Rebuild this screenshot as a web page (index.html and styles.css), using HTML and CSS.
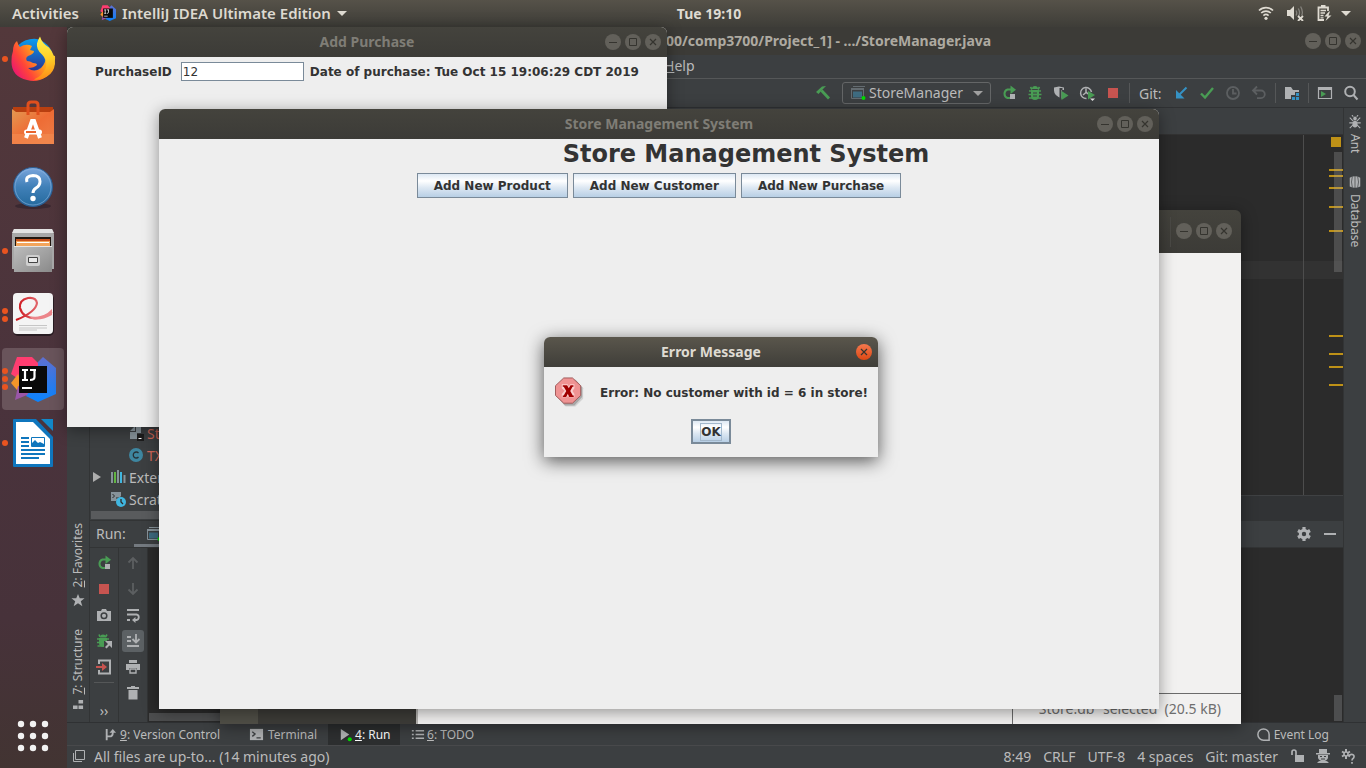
FILE: index.html
```html
<!DOCTYPE html>
<html lang="en">
<head>
<meta charset="utf-8">
<title>Store Management System</title>
<link rel="stylesheet" href="styles.css">
</head>
<body>
<svg class="defs" aria-hidden="true">
  <defs>
    <linearGradient id="g-help" x1="0" y1="0" x2="0" y2="1"><stop offset="0" stop-color="#7aa5dc"/><stop offset=".5" stop-color="#4080b8"/><stop offset="1" stop-color="#24699c"/></linearGradient>
    <linearGradient id="g-bag" x1="0" y1="0" x2="1" y2="1"><stop offset="0" stop-color="#e39a52"/><stop offset=".5" stop-color="#ee6c35"/><stop offset="1" stop-color="#ef8048"/></linearGradient>
    <linearGradient id="g-steel" x1="0" y1="0" x2="1" y2="1"><stop offset="0" stop-color="#bdbdbd"/><stop offset="1" stop-color="#8a8a8a"/></linearGradient>
    <linearGradient id="g-fox" x1="1" y1=".2" x2="0" y2=".8"><stop offset="0" stop-color="#ffd93a"/><stop offset=".4" stop-color="#ff9b1c"/><stop offset=".7" stop-color="#ff4538"/><stop offset="1" stop-color="#e8107a"/></linearGradient>
    <linearGradient id="g-tail" x1="0" y1="0" x2="0" y2="1"><stop offset="0" stop-color="#fff44f"/><stop offset=".5" stop-color="#ffd028"/><stop offset="1" stop-color="#ff8a16"/></linearGradient>
    <linearGradient id="g-globe" x1="0" y1="0" x2="0" y2="1"><stop offset="0" stop-color="#0a9cf0"/><stop offset="1" stop-color="#2a2f8e"/></linearGradient>
    <linearGradient id="g-ribbon" x1="0" y1="0" x2="1" y2="0"><stop offset="0" stop-color="#cc1118"/><stop offset="1" stop-color="#f0a0a4"/></linearGradient>
    <linearGradient id="g-idea" x1="0" y1="0" x2="0" y2="1"><stop offset="0" stop-color="#5f6fd0"/><stop offset="1" stop-color="#0a84ff"/></linearGradient>
  </defs>
  <symbol id="i-min" viewBox="0 0 16 16"><path d="M4 8.500h8" stroke="currentColor" fill="none"/></symbol>
  <symbol id="i-max" viewBox="0 0 16 16"><path d="M4.500 4.500h7v7h-7z" stroke="currentColor" fill="none"/></symbol>
  <symbol id="i-close" viewBox="0 0 16 16"><path d="M5 5l6 6M11 5l-6 6" stroke="currentColor" stroke-width="1.200" fill="none"/></symbol>
  <symbol id="i-idea" viewBox="0 0 46 46">
    <path d="M26 8L33 1l13 11v26L28 46 16 40z" fill="url(#g-idea)"/>
    <path d="M7 1h15l6 6v12L10 24 1 18z" fill="#ff3d70"/><path d="M1 27l7-9 6 14-7 2z" fill="#f5962a"/><path d="M8 30l-3 14 12-5 4-6z" fill="#9a56a8"/>
    <path d="M9 10h28v27H9z" fill="#0a0a0a"/><path d="M12 14h6M15 14v10M12 24h6M20 14h6M24.500 14v7q0 3-4.500 3" stroke="#fff" stroke-width="2.200" fill="none"/><path d="M12 31h10v2H12z" fill="#fff"/>
  </symbol>
  <symbol id="i-rerun" viewBox="0 0 16 16"><path d="M9 13H6.500A4.500 4.500 0 0 1 6.500 4.500H11" fill="none" stroke="#499c54" stroke-width="2"/><path d="M9.500 0.500L15 4.800 9.500 9z" fill="#499c54"/><path d="M9 9h5v5H9z" fill="#afb1b3"/></symbol>
  <symbol id="i-bug" viewBox="0 0 16 16"><path d="M5 4.500L3.500 2M11 4.500L12.500 2M2 6h12M1.500 9.500h13M2 13h12" stroke="#499c54" stroke-width="1.600"/><path d="M5 4a3 3 0 0 1 6 0zM4 5h8v6a4 4 0 0 1-8 0z" fill="#499c54"/><path d="M6 8h4M6 11h4" stroke="#3c3f41"/></symbol>
  <symbol id="i-stop" viewBox="0 0 16 16"><path d="M3 3h10v10H3z" fill="#c75450"/></symbol>
  <symbol id="i-app" viewBox="0 0 16 16"><path d="M3 1.500h12" stroke="currentColor"/><path d="M1.500 4.500h12v9h-12z" fill="none" stroke="currentColor"/><path d="M1 3h13v2H1z" fill="currentColor"/><path d="M3 6.500h9v6H3z" fill="#3e6b80"/><circle cx="13.500" cy="13" r="2" fill="#0d0"/></symbol>
  <symbol id="i-term" viewBox="0 0 16 16"><path d="M1 2h14v12H1z" fill="#afb1b3"/><path d="M3.500 5l3 2.500-3 2.500M8 11.500h4.500" fill="none" stroke="#3c3f41" stroke-width="1.400"/></symbol>
</svg>

<div class="desktop">
  <header class="topbar">
    <div class="topbar-left">
      <button class="bar-btn">Activities</button>
      <button class="bar-btn app-menu"><svg class="ic"><use href="#i-idea"/></svg>IntelliJ IDEA Ultimate Edition<span class="caret"></span></button>
    </div>
    <button class="bar-btn clock">Tue 19:10</button>
    <button class="bar-btn tray" aria-label="System menu">
      <svg class="ic" viewBox="0 0 16 16" fill="none" stroke="#dfdbd2" stroke-width="1.700"><path d="M1 5.500a10 10 0 0 1 14 0M3.200 8a7 7 0 0 1 9.600 0M5.400 10.600a4 4 0 0 1 5.200 0"/><circle cx="8" cy="13.300" r="1.600" fill="#dfdbd2" stroke="none"/></svg>
      <svg class="ic wide" viewBox="0 0 18 16"><path d="M1 5h3l4-4v14l-4-4H1z" fill="#dfdbd2"/><path d="M10 5.500q1.500 2.500 0 5M12.300 3.500q2.500 4.500 0 8M14.600 1.500q3 5 1 9" stroke="#84827c" stroke-width="1.300" fill="none"/><path d="M12 11l5 5M17 11l-5 5" stroke="#dfdbd2" stroke-width="1.800"/></svg>
      <svg class="ic" viewBox="0 0 16 16"><path d="M8 15H2.500V2.500H12V6" fill="none" stroke="#dfdbd2" stroke-width="1.800"/><path d="M5 0h4.500v2.500H5z" fill="#dfdbd2"/><path d="M4.500 5.500h5.500M4.500 8h4.500M4.500 10.500h3M4.500 12.800h3" stroke="#dfdbd2" stroke-width="1.300"/><path d="M13 6.500L8.500 11.500h3l-2 4.500 6-5.500h-3l1.500-4z" fill="#dfdbd2"/></svg>
      <span class="caret"></span>
    </button>
  </header>

  <div class="main">
    <nav class="dock" aria-label="Dock">
      <button class="dock-item" aria-label="Firefox"><span class="dots"><i></i></span>
        <svg viewBox="0 0 46 46"><circle cx="23" cy="23.500" r="20.500" fill="url(#g-globe)"/><path d="M10 10q3-5 12-7 6-1 9 3l4 14-2 10-11 6-9-10z" fill="url(#g-globe)"/><path d="M3 15Q3 8 7 5q1 4 3 6 6-4 12-1l-2 4 4 1q0 3-6 5-3 2-1 5 3 0 6 2 4 0 4 2-3 3-9 3 6 5 13 0 6-6 5-14l9 2q1 14-9 21-9 6-19 3Q1 40 1.500 25q0-6 1.500-10z" fill="url(#g-fox)"/><path d="M30 .5q2 7 9 11 6 7 6 16-1 9-8 13-6 4-13 3 9-4 12-12 1-8-4-13-6-5-5-11 1-4 3-7z" fill="url(#g-tail)"/></svg></button>
      <button class="dock-item" aria-label="Ubuntu Software"><span class="dots"></span>
        <svg viewBox="0 0 46 46"><path d="M3 7h40v5H3z" fill="#b83f10"/><path d="M2 9l4 3h34l4-3v35H2z" fill="url(#g-bag)"/><path d="M2 34h42v10H2z" fill="#f28a50" opacity=".7"/><path d="M18 15V5q0-3 3-3h4q3 0 3 3v10" fill="none" stroke="#e04f1d" stroke-width="3"/><path d="M16 38l6-17h2l6 17" stroke="#fff" stroke-width="4" fill="none"/><rect x="14" y="29.500" width="18" height="5" rx="2.500" fill="#fff"/><path d="M16 32h10" stroke="#e9652e" stroke-width="2"/></svg></button>
      <button class="dock-item" aria-label="Help"><span class="dots"></span>
        <svg viewBox="0 0 46 46"><ellipse cx="23" cy="42" rx="18" ry="3" fill="#3a2830"/><circle cx="23" cy="23" r="19.500" fill="url(#g-help)" stroke="#2c5e93"/><circle cx="23" cy="23" r="18" fill="none" stroke="#8db4e0" opacity=".6"/><path d="M17 18q-2-6 6-6.500 7 0 7 6 0 4-4 6.500-3 2-3 5" fill="none" stroke="#fff" stroke-width="3"/><circle cx="23" cy="34.500" r="2.700" fill="#fff"/></svg></button>
      <button class="dock-item" aria-label="Files"><span class="dots"><i></i></span>
        <svg viewBox="0 0 46 46"><path d="M4 1h38l2 5v35H2V6z" fill="#a8a8a8"/><path d="M4 1h38l2 4H2z" fill="#e3e3e3"/><path d="M5 9h36v10H5z" fill="#20160f"/><path d="M6 11h34v7H6z" fill="#c8501c"/><path d="M6 13h34v5H6z" fill="#f3a55c"/><path d="M7 14h32v1H7z" fill="#fff"/><path d="M4 18h38v26H4z" fill="url(#g-steel)"/><path d="M4 18h38v1H4z" fill="#e6e6e6"/><rect x="16" y="27" width="14" height="11" rx="2" fill="#cfcfcf"/><path d="M18.500 29.500h9v5h-9z" fill="#e9e9e9" stroke="#444"/></svg></button>
      <button class="dock-item" aria-label="Document Viewer"><span class="dots"><i></i><i></i></span>
        <svg viewBox="0 0 46 46"><rect x="3" y="2" width="41" height="42" rx="5" fill="#281c22"/><rect x="3" y="1" width="40" height="41" rx="4" fill="#f4f4f4"/><path d="M6 28Q26 20 27 11 26 5 18 6q-9 2-8 10 3 11 18 10 8-1 14-6" fill="none" stroke="url(#g-ribbon)" stroke-width="2.200"/><path d="M20 25q14 1 22-8v6q-11 6-20 4z" fill="#ec858a"/><path d="M9 33.500h28M9 36h28M9 38h18" stroke="#c6c6c6"/></svg></button>
      <button class="dock-item active" aria-label="IntelliJ IDEA"><span class="dots"><i></i><i></i><i></i></span>
        <svg><use href="#i-idea"/></svg></button>
      <button class="dock-item" aria-label="LibreOffice Writer"><span class="dots"><i></i></span>
        <svg class="tall" viewBox="0 0 46 48"><path d="M4 0h22l17 18v29a1 1 0 0 1-1 1H4a1 1 0 0 1-1-1V1a1 1 0 0 1 1-1z" fill="#0f76bd"/><path d="M31 0h12v12z" fill="#1288c9"/><path d="M6 3h17l17 17v25H6z" fill="#fff"/><path d="M11 19h8M11 23h8M11 27h8M11 31h24M11 35h24M11 39h18" stroke="#0f76bd" stroke-width="2"/><path d="M21.500 18.500h13v9h-13z" fill="#fff" stroke="#0f76bd"/><path d="M22 27v-3l3-3 3 3 2-1 4 2v2z" fill="#0f76bd"/></svg></button>
      <button class="dock-item apps" aria-label="Show Applications"><span class="dots"></span>
        <svg viewBox="0 0 46 46" fill="#f2f2f2"><circle cx="11" cy="11" r="3.200"/><circle cx="23" cy="11" r="3.200"/><circle cx="35" cy="11" r="3.200"/><circle cx="11" cy="23" r="3.200"/><circle cx="23" cy="23" r="3.200"/><circle cx="35" cy="23" r="3.200"/><circle cx="11" cy="35" r="3.200"/><circle cx="23" cy="35" r="3.200"/><circle cx="35" cy="35" r="3.200"/></svg></button>
    </nav>

    <div class="workspace">
      <section class="ide" aria-label="IntelliJ IDEA">
        <div class="ide-title"><span class="ide-name">00/comp3700/Project_1] - .../StoreManager.java</span>
          <div class="controls"><button aria-label="Minimize"><svg><use href="#i-min"/></svg></button><button aria-label="Maximize"><svg><use href="#i-max"/></svg></button><button aria-label="Close"><svg><use href="#i-close"/></svg></button></div>
        </div>
        <div class="ide-menu"><button><u>H</u>elp</button></div>
        <div class="ide-toolbar">
          <button class="tool" aria-label="Build"><svg viewBox="0 0 16 16"><path d="M6.500 5.500L14 13.500" stroke="#499c54" stroke-width="2.800"/><path d="M1 7l6-5.500 4-.5-3 3-4.500 5z" fill="#499c54"/></svg></button>
          <div class="combo"><svg class="ic"><use href="#i-app"/></svg><select aria-label="Run configuration"><option>StoreManager</option></select><span class="caret"></span></div>
          <button class="tool" aria-label="Rerun"><svg><use href="#i-rerun"/></svg></button>
          <button class="tool" aria-label="Debug"><svg><use href="#i-bug"/></svg></button>
          <button class="tool" aria-label="Coverage"><svg viewBox="0 0 16 16"><path d="M1 2.500l5-1 5 1V5L9 5v8.500q-8-2.500-8-8z" fill="#afb1b3"/><path d="M6.500 3h3v2l-1 0v8h-2z" fill="#3c3f41"/><path d="M8.500 6l7 4.500-7 4.500z" fill="#499c54"/></svg></button>
          <button class="tool" aria-label="Profile"><svg viewBox="0 0 16 16"><path d="M12.500 7a5.500 5.500 0 1 0-5 6.500M7 3.500v4L4 10M7 7l2 2" fill="none" stroke="#afb1b3" stroke-width="1.500"/><path d="M9 6l7 4-7 4.500z" fill="#499c54"/><path d="M11 13.500h5L13.500 16z" fill="#ddd"/></svg></button>
          <button class="tool" aria-label="Stop"><svg><use href="#i-stop"/></svg></button>
          <span class="sep"></span><span class="git">Git:</span>
          <button class="tool" aria-label="Update Project"><svg viewBox="0 0 16 16"><path d="M13.500 2.500L5 11" stroke="#3592c4" stroke-width="2"/><path d="M3 5v8.500h8.500z" fill="#3592c4"/></svg></button>
          <button class="tool" aria-label="Commit"><svg viewBox="0 0 16 16"><path d="M2 8.500l4 4L14 3" fill="none" stroke="#499c54" stroke-width="2.400"/></svg></button>
          <button class="tool" aria-label="History"><svg viewBox="0 0 16 16" fill="none" stroke="#5c5f61" stroke-width="1.800"><circle cx="8" cy="8" r="6"/><path d="M8 4v4.500h3.500"/></svg></button>
          <button class="tool" aria-label="Rollback"><svg viewBox="0 0 16 16" fill="none" stroke="#5c5f61" stroke-width="1.800"><path d="M2.500 5.500H10a3.800 3.800 0 0 1 0 7.600H6M6 1.500l-4 4 4 4"/></svg></button>
          <span class="sep"></span>
          <button class="tool" aria-label="Project Structure"><svg viewBox="0 0 16 16"><path d="M1 2h6l2 3h6v2h-4v3H7v4H1z" fill="#afb1b3"/><path d="M12 8h3v3h-3zM8 12h3v3H8zM12 12h3v3h-3zM8 11h3v0H8z" fill="#3592c4"/></svg></button>
          <span class="sep"></span>
          <button class="tool" aria-label="Run Anything"><svg viewBox="0 0 16 16"><path d="M1.500 2.500h13v11h-13z" fill="none" stroke="#afb1b3" stroke-width="1.200"/><path d="M1 2h14v3H1z" fill="#afb1b3"/><path d="M4 6l5 3-5 3z" fill="#499c54"/></svg></button>
          <button class="tool" aria-label="Search"><svg viewBox="0 0 16 16" fill="none" stroke="#afb1b3" stroke-width="2"><circle cx="7" cy="6.500" r="4.800"/><path d="M10.500 10l4 4.500"/></svg></button>
        </div>

        <div class="ide-body">
          <div class="stripe left">
            <button class="stripe-btn"><svg class="ic" viewBox="0 0 16 16"><path d="M8 1l2 5h5.500l-4.300 3.500L13 15l-5-3.300L3 15l1.800-5.500L.5 6H6z" fill="#afb1b3"/></svg><span class="up"><u>2</u>: Favorites</span></button>
            <button class="stripe-btn"><svg class="ic sm" viewBox="0 0 12 12"><path d="M6 1h5v4H6zM0 7h5v4H0zM6 7h5v4H6z" fill="#afb1b3"/></svg><span class="up"><u>7</u>: Structure</span></button>
          </div>
          <div class="center">
            <div class="upper">
              <div class="project">
                <div class="row deep red"><svg class="ic" viewBox="0 0 16 16"><path d="M2 6l5-5v5zM8 1h5v7H9v6H2V7h6z" fill="#87939a"/><path d="M9 9h7v7H9z" fill="#1e1e1e"/><path d="M10.500 13.500h3" stroke="#fff"/></svg>Store</div>
                <div class="row deep red"><svg class="ic" viewBox="0 0 16 16"><circle cx="8" cy="8" r="7" fill="#3e86a0"/><path d="M10.500 6a3 3 0 1 0 0 4" fill="none" stroke="#263238" stroke-width="1.300"/></svg>TXT</div>
                <div class="row"><span class="twist"></span><svg class="ic" viewBox="0 0 16 16"><path d="M2 3v11M14.500 6v8" stroke="#87939a" stroke-width="2"/><path d="M5 3v11" stroke="#62b543" stroke-width="2"/><path d="M8 1v13" stroke="#87939a" stroke-width="2"/><path d="M11 3v11" stroke="#40b6e0" stroke-width="2"/></svg>External Libraries</div>
                <div class="row"><span class="twist none"></span><svg class="ic" viewBox="0 0 16 16"><path d="M1 1h10v4L6 10H1z" fill="#87939a"/><path d="M2.500 3l2 2-2 2M6 7h3" fill="none" stroke="#2b2b2b"/><circle cx="11" cy="11" r="5" fill="#40b6e0"/><path d="M11 8v3l2 2" stroke="#2b2b2b" fill="none" stroke-width="1.300"/></svg>Scratches and Consoles</div>
                <div class="hbar"></div>
              </div>
              <div class="editor-col">
                <div class="tabs"></div>
                <div class="editor">
                  <div class="caret-row"></div><div class="ruler"></div>
                  <div class="warn"></div>
                  <i class="mark" style="top:34px"></i><i class="mark" style="top:40px"></i><i class="mark" style="top:52px"></i><i class="mark" style="top:71px"></i><i class="mark" style="top:95px"></i><i class="mark" style="top:200px"></i><i class="mark" style="top:218px"></i><i class="mark" style="top:231px"></i><i class="mark" style="top:249px"></i>
                  <div class="vbar"></div>
                </div>
                <div class="crumbs"></div>
              </div>
            </div>
            <div class="run">
              <div class="run-head"><span class="run-label">Run:</span><span class="run-tab"><svg class="ic"><use href="#i-app"/></svg></span>
                <span class="run-tools"><button aria-label="Settings"><svg class="ic" viewBox="0 0 16 16"><path d="M8 1v14M2 4.500l12 7M14 4.500l-12 7" stroke="#afb1b3" stroke-width="3.200"/><circle cx="8" cy="8" r="3.700" fill="#3c3f41" stroke="#afb1b3" stroke-width="3"/></svg></button><button aria-label="Hide"><svg class="ic" viewBox="0 0 16 16"><path d="M2 8h12" stroke="#afb1b3" stroke-width="2"/></svg></button></span>
              </div>
              <div class="run-body">
                <div class="run-col">
                  <button aria-label="Rerun"><svg><use href="#i-rerun"/></svg></button>
                  <button aria-label="Stop"><svg><use href="#i-stop"/></svg></button>
                  <button aria-label="Dump Threads"><svg viewBox="0 0 16 16"><path d="M1 4h4l1-2h4l1 2h4v10H1z" fill="#afb1b3"/><circle cx="8" cy="8.800" r="2.800" fill="none" stroke="#3c3f41" stroke-width="1.500"/></svg></button>
                  <button aria-label="Attach Debugger"><svg viewBox="0 0 16 16"><path d="M4 4L3 1.500M9.500 4L11 1.500M1 6h12M1 9.500h7M1.500 13h6" stroke="#499c54" stroke-width="1.600"/><path d="M4 4.500a3 3 0 0 1 6 0zM3 5h8v3H8v6q-5 0-5-4z" fill="#499c54"/><path d="M9 8h7v7l-2.500-2.500L10.500 15.500 9 14l3-3z" fill="#afb1b3"/></svg></button>
                  <button aria-label="Exit"><svg viewBox="0 0 16 16"><path d="M3 5V1.500h11v13H3V11" fill="none" stroke="#afb1b3" stroke-width="2"/><path d="M0 8h8" stroke="#c75450" stroke-width="2"/><path d="M6 4l5 4-5 4z" fill="#c75450"/></svg></button>
                  <hr>
                  <button class="more" aria-label="More">››</button>
                </div>
                <div class="run-col second">
                  <button aria-label="Up"><svg viewBox="0 0 16 16" fill="none" stroke="#5c5f61" stroke-width="1.800"><path d="M8 14V3M3.500 7.500L8 3l4.500 4.500"/></svg></button>
                  <button aria-label="Down"><svg viewBox="0 0 16 16" fill="none" stroke="#5c5f61" stroke-width="1.800"><path d="M8 2v11M3.500 8.500L8 13l4.500-4.500"/></svg></button>
                  <button aria-label="Soft Wrap"><svg viewBox="0 0 16 16" fill="none" stroke="#afb1b3" stroke-width="1.800"><path d="M2 3h12M2 7.500h9.500a2.800 2.800 0 0 1 0 5.500H9M2 13h3"/><path d="M10.500 10v6L7 13z" fill="#afb1b3" stroke="none"/></svg></button>
                  <button class="on" aria-label="Scroll to End"><svg viewBox="0 0 16 16" fill="none" stroke="#afb1b3" stroke-width="1.800"><path d="M2 4h4M2 8h4M2 13h12M11 1v8M7.500 6L11 9.500 14.500 6"/></svg></button>
                  <button aria-label="Print"><svg viewBox="0 0 16 16"><path d="M4 1h8v3H4zM1 5h14v6h-3V9H4v2H1z" fill="#afb1b3"/><path d="M5 10h6v4H5z" fill="none" stroke="#afb1b3" stroke-width="1.400"/></svg></button>
                  <button aria-label="Clear"><svg viewBox="0 0 16 16"><path d="M6 1h4v1h4v2H2V2h4zM3.500 5h9v9.500h-9z" fill="#afb1b3"/></svg></button>
                </div>
                <div class="console"><div class="console-bar"></div><div class="console-vbar"></div></div>
              </div>
            </div>
          </div>
          <div class="stripe right">
            <button class="stripe-btn"><svg class="ic" viewBox="0 0 16 16"><ellipse cx="8" cy="4" rx="2" ry="2.200" fill="#afb1b3"/><ellipse cx="8" cy="10.500" rx="2.800" ry="3.800" fill="#afb1b3"/><path d="M6 7L2 3M10 7l4-4M6 9H1.500M10 9h4.500M6 11l-4 4M10 11l4 4M6 2L4.500 0M10 2l1.500-2" stroke="#afb1b3" stroke-width="1.200"/></svg><span>Ant</span></button>
            <button class="stripe-btn"><svg class="ic" viewBox="0 0 16 16"><path d="M2 3q6-3 12 0v10q-6 3-12 0z" fill="#afb1b3"/><path d="M5 1.500q-2 6.500 0 13M8 1v14M11 1.500q2 6.500 0 13" fill="none" stroke="#3c3f41" stroke-width=".8"/></svg><span>Database</span></button>
          </div>
        </div>

        <div class="ide-strip">
          <button class="vcs"><svg class="ic" viewBox="0 0 16 16"><path d="M5 2v12M5 10h3q3.500 0 3.500-4V5" fill="none" stroke="#afb1b3" stroke-width="2"/><path d="M8 6l3.500-4L15 6z" fill="#afb1b3"/></svg><span><u>9</u>: Version Control</span></button>
          <button class="term"><svg class="ic"><use href="#i-term"/></svg>Terminal</button>
          <button class="runbtn on"><svg class="ic" viewBox="0 0 16 16"><path d="M3 2l9 6-9 6z" fill="#afb1b3"/><circle cx="12.500" cy="13" r="2.200" fill="#0d0"/></svg><span><u>4</u>: Run</span></button>
          <button class="todo"><svg class="ic" viewBox="0 0 16 16"><path d="M2 4h2M6 4h9M2 8h2M6 8h9M2 12h2M6 12h9" stroke="#afb1b3" stroke-width="1.800"/></svg><span><u>6</u>: TODO</span></button>
          <button class="event"><svg class="ic" viewBox="0 0 16 16"><path d="M14 14H8a6 6 0 1 1 6-6z" fill="none" stroke="#afb1b3" stroke-width="1.600"/></svg>Event Log</button>
        </div>
        <div class="ide-status">
          <svg class="ic" viewBox="0 0 16 16" fill="none" stroke="#afb1b3"><path d="M4.500 2.500h9v9h-9zM2.500 5v8.500H11"/></svg>
          <span class="msg">All files are up-to... (14 minutes ago)</span>
          <span class="pos">8:49</span><span class="crlf">CRLF</span><span class="enc">UTF-8</span><span class="ind">4 spaces</span><span class="branch">Git: master</span>
          <svg class="ic" viewBox="0 0 16 16"><path d="M5 7h9v7H5z" fill="#afb1b3"/><path d="M2 7V4q0-2 2-2t2 2v3" fill="none" stroke="#afb1b3" stroke-width="1.700"/></svg>
          <svg class="ic" viewBox="0 0 16 16"><path d="M4 1h8v4h3v1.500H1V5h3zM3 7h10v3q-1 3-5 3t-5-3zM2 15q2-3 6-2 4-1 6 2z" fill="#afb1b3"/><path d="M5 8.500h2M9 8.500h2M6 11h4" stroke="#3c3f41"/></svg>
          <svg class="ic" viewBox="0 0 16 16"><path d="M6 1v10M2 3.500l8 5M10 3.500l-8 5" stroke="#afb1b3" stroke-width="2"/><circle cx="6" cy="6" r="2" fill="#3c3f41" stroke="#afb1b3" stroke-width="1.500"/><path d="M9 8q1-2 3.500-1.500 2.500 1 1 3.500-1.500 1-1.500 2.500M12 14v1.700" fill="none" stroke="#afb1b3" stroke-width="1.700"/></svg>
        </div>
      </section>

      <section class="window files" aria-label="Files">
        <div class="files-head"><div class="controls"><button aria-label="Minimize"><svg><use href="#i-min"/></svg></button><button aria-label="Maximize"><svg><use href="#i-max"/></svg></button><button aria-label="Close"><svg><use href="#i-close"/></svg></button></div></div>
        <div class="files-body"><div class="files-rail"></div><div class="files-side"></div><div class="files-view"><div class="files-status">“Store.db” selected&nbsp; (20.5 kB)</div></div></div>
      </section>

      <section class="window purchase" aria-label="Add Purchase">
        <div class="titlebar"><h2>Add Purchase</h2><div class="controls"><button aria-label="Minimize"><svg><use href="#i-min"/></svg></button><button aria-label="Maximize"><svg><use href="#i-max"/></svg></button><button aria-label="Close"><svg><use href="#i-close"/></svg></button></div></div>
        <form class="purchase-form"><label for="pid">PurchaseID</label><input id="pid" type="text" value="12"><span>Date of purchase: Tue Oct 15 19:06:29 CDT 2019</span></form>
      </section>

      <section class="window store" aria-label="Store Management System">
        <div class="titlebar"><h2>Store Management System</h2><div class="controls"><button aria-label="Minimize"><svg><use href="#i-min"/></svg></button><button aria-label="Maximize"><svg><use href="#i-max"/></svg></button><button aria-label="Close"><svg><use href="#i-close"/></svg></button></div></div>
        <h1>Store Management System</h1>
        <div class="store-actions"><button class="jbtn">Add New Product</button><button class="jbtn">Add New Customer</button><button class="jbtn">Add New Purchase</button></div>
      </section>

      <section class="window dialog" role="dialog" aria-label="Error Message">
        <div class="titlebar"><h2>Error Message</h2><div class="controls"><button aria-label="Close"><svg><use href="#i-close"/></svg></button></div></div>
        <div class="message">
          <svg viewBox="0 0 32 32"><path d="M10 3h12l7 8v11l-8 8H11l-7-8V11z" fill="#000" opacity=".12"/><path d="M10 2h11l7 8v10l-8 9H10l-7-8V10z" fill="#000" opacity=".2"/><path d="M9 .5h9l8.500 8v10L18 26.500H9L.5 18.500v-10z" fill="#ef9393" stroke="#a05a5a"/><path d="M7 7h6l1.200 2.500L15.500 7H20v4l-2 3 2 3v3.500h-5.500l-1-2-1 2H7V17l3-3.200L7 11z" fill="#fbd0d0"/><path d="M8 8h4.500l1.700 3.200L16 8h3v1.500h-1L15.700 14l2.600 4.500h1V20h-4.600l-1.500-3.200-1.700 3.200H8v-1.500h1l2.600-4.500L9 9.500H8z" fill="#a00000"/></svg>
          <p>Error: No customer with id = 6 in store!</p>
        </div>
        <button class="jbtn ok"><span>OK</span></button>
      </section>
    </div>
  </div>
</div>
</body>
</html>
```

FILE: styles.css
```css
* { box-sizing: border-box; }

body {
  margin: 0;
  font-family: "Noto Sans", "Open Sans", sans-serif;
  font-size: 14px;
  color: #bbbbbb;
}

button {
  margin: 0;
  padding: 0;
  border: 0;
  background: none;
  color: inherit;
  font: inherit;
}

h1, h2, p { margin: 0; }
.defs { position: absolute; width: 0; height: 0; }

.ic { width: 16px; height: 16px; flex: none; }
.ic.sm { width: 12px; height: 12px; }
.ic.wide { width: 18px; }

.caret {
  width: 0;
  height: 0;
  border: 5px solid transparent;
  border-top-color: currentColor;
  border-bottom: 0;
}

.desktop {
  display: flex;
  flex-direction: column;
  height: 100vh;
  overflow: hidden;
  background: #3c3f41;
}

/* top panel */
.topbar {
  display: flex;
  flex: none;
  height: 27px;
  background: linear-gradient(#565249, #3e3d38);
  color: #dfdbd2;
  font-size: 15px;
  font-weight: 600;
}
.topbar-left { display: flex; flex: 1 1 67px; gap: 21px; padding-left: 12px; }
.bar-btn { display: flex; align-items: center; padding-bottom: 1px; white-space: nowrap; }
.app-menu { gap: 6px; }
.clock { font-size: 14px; font-weight: 700; }
.tray { flex: 1 1 0; justify-content: flex-end; gap: 12px; padding-right: 15px; }
.tray .caret { margin-left: -3px; }

.main { display: flex; flex: 1; min-height: 0; }

/* dock */
.dock {
  display: flex;
  flex-direction: column;
  flex: none;
  width: 67px;
  background: linear-gradient(#53383b, #4a333c 50%, #47323a 80%, #423432);
}
.dock-item {
  display: flex;
  align-items: center;
  width: 62px;
  height: 62px;
  margin: 1px 2px;
  border-radius: 4px;
}
.dock-item.active { background: #69545b; }
.dock-item svg { width: 46px; height: 46px; }
.dock-item svg.tall { height: 48px; }
.dock-item.apps { margin-top: auto; }
.dots { display: flex; flex-direction: column; gap: 2px; width: 8px; }
.dots i { width: 6px; height: 6px; border-radius: 50%; background: #e95420; }

/* window chrome */
.workspace { position: relative; flex: 1; min-width: 0; }
.controls { display: flex; gap: 4px; }
.controls button {
  width: 16px;
  height: 16px;
  border-radius: 50%;
  background: #62605a;
  color: #35342f;
}
.controls svg { display: block; width: 16px; height: 16px; }
.window { position: absolute; box-shadow: 0 3px 16px rgba(0, 0, 0, .4); border-radius: 6px 6px 0 0; }
.titlebar {
  display: flex;
  align-items: center;
  height: 30px;
  padding: 0 6px;
  border-radius: 6px 6px 0 0;
  background: linear-gradient(#44433d, #3c3b37);
  color: #7f7d76;
}
.titlebar h2 { flex: 1; padding-bottom: 2px; font-size: 14px; font-weight: 700; text-align: center; }
.titlebar .controls { margin-left: -56px; }

/* IDE frame */
.ide { display: flex; flex-direction: column; height: 100%; background: #3c3f41; }
.ide-title {
  display: flex;
  align-items: center;
  justify-content: space-between;
  flex: none;
  height: 28px;
  padding: 0 5px 0 599px;
  background: #3c3b37;
  color: #aeaaa1;
  font-weight: 700;
}
.ide-name { padding-bottom: 1px; }
.ide-menu { flex: none; height: 24px; padding: 1px 0 0 597px; border-bottom: 1px solid #555758; }
.ide-toolbar {
  display: flex;
  align-items: center;
  justify-content: flex-end;
  flex: none;
  height: 29px;
  padding-right: 2px;
  border-bottom: 1px solid #2f3133;
}
.tool { display: flex; justify-content: center; width: 26px; }
.tool svg { width: 16px; height: 16px; }
.combo {
  display: flex;
  align-items: center;
  gap: 3px;
  width: 149px;
  height: 22px;
  margin: 0 5px 0 6px;
  padding: 0 7px;
  border: 1px solid #646667;
  border-radius: 3px;
}
.combo .ic { color: #646c71; }
.combo select {
  flex: 1;
  min-width: 0;
  padding: 0 0 1px;
  border: 0;
  appearance: none;
  background: transparent;
  color: inherit;
  font: inherit;
}
.combo .caret { color: #a0a0a0; }
.sep { width: 1px; height: 20px; margin: 0 3px; background: #555758; }
.git { width: 35px; padding-left: 6px; }

.ide-body { display: flex; flex: 1; min-height: 0; }
.stripe {
  display: flex;
  flex-direction: column;
  flex: none;
  width: 23px;
  font-size: 12px;
}
.stripe.left { justify-content: flex-end; gap: 22px; padding-bottom: 12px; border-right: 1px solid #323435; }
.stripe.left .stripe-btn { flex-direction: column-reverse; }
.stripe.right { gap: 22px; padding-top: 7px; border-left: 1px solid #323435; }
.stripe-btn { display: flex; flex-direction: column; align-items: center; gap: 5px; }
.stripe-btn .ic { width: 14px; height: 14px; }
.stripe-btn .sm { width: 11px; height: 11px; }
.stripe-btn span { writing-mode: vertical-rl; line-height: 16px; }
.stripe-btn .up { transform: rotate(180deg); }

.center { display: flex; flex-direction: column; flex: 1; min-width: 0; }
.upper { display: flex; flex: 1; min-height: 0; }
.project { display: flex; flex-direction: column; justify-content: flex-end; flex: none; width: 300px; }
.row { display: flex; align-items: center; gap: 3px; height: 22px; padding-left: 3px; }
.row.deep { padding-left: 38px; }
.row.red { color: #d1675a; }
.twist {
  width: 8px;
  margin-right: 6px;
  border: 5px solid transparent;
  border-left: 8px solid #adadad;
  border-right: 0;
}
.twist.none { visibility: hidden; }
.hbar { height: 8px; margin: 1px 0 1px 1px; background: #595b5d; }
.editor-col { display: flex; flex-direction: column; flex: 1; }
.tabs { height: 27px; border-bottom: 1px solid #323232; }
.editor { position: relative; flex: 1; background: #2b2b2b; }
.caret-row { position: absolute; top: 126px; left: 0; right: 0; height: 18px; background: #323232; }
.ruler { position: absolute; top: 0; bottom: 0; right: 39px; width: 1px; background: #4d4d4d; }
.warn { position: absolute; top: 2px; right: 2px; width: 10px; height: 10px; background: #be9117; }
.mark { position: absolute; right: 0; width: 14px; height: 2px; background: #be9117; }
.vbar { position: absolute; top: 17px; right: 1px; width: 8px; height: 120px; background: rgba(166, 166, 166, .28); }
.crumbs { height: 25px; border-top: 1px solid #3f4143; background: #313335; }

.run { flex: none; }
.run-head { display: flex; height: 28px; border: solid #323435; border-width: 1px 0; }
.run-label { padding: 3px 8px 0 6px; }
.run-tab { padding: 5px 4px 0 12px; border-bottom: 3px solid #747a80; color: #87939a; }
.run-tools { display: flex; align-items: center; gap: 10px; margin-left: auto; padding-right: 5px; }
.run-tools button { display: flex; }
.run-body { display: flex; height: 174px; }
.run-col {
  display: flex;
  flex-direction: column;
  align-items: center;
  gap: 4px;
  width: 29px;
  padding-top: 4px;
  border-right: 1px solid #323435;
}
.run-col button { display: grid; place-items: center; width: 22px; height: 22px; border-radius: 3px; }
.run-col svg { width: 16px; height: 16px; }
.run-col .on { background: #5c6164; }
.run-col hr { width: 20px; margin: 0; border: 0; border-top: 1px solid #555758; }
.run-col .more { margin-top: 12px; }
.console { display: flex; align-items: flex-end; justify-content: space-between; flex: 1; padding: 1px; background: #2b2b2b; }
.console-bar { width: 300px; height: 8px; background: #4d4e4f; }
.console-vbar { width: 8px; height: 26px; background: #4d4e4f; }

.ide-strip { display: flex; flex: none; height: 23px; border-top: 1px solid #2f3133; font-size: 12px; }
.ide-strip button { display: flex; align-items: center; gap: 2px; padding: 0 10px; white-space: nowrap; }
.ide-strip .ic { width: 15px; height: 15px; }
.ide-strip .vcs { width: 172px; padding: 0 0 0 35px; gap: 3px; }
.ide-strip .term { width: 89px; padding: 0 0 0 10px; gap: 4px; }
.ide-strip .on { width: 72px; background: #2d2f30; color: #fff; }
.ide-strip .event { margin-left: auto; padding-right: 37px; gap: 3px; }
.ide-status {
  display: flex;
  align-items: center;
  flex: none;
  height: 23px;
  padding: 0 10px 2px 4px;
  border-top: 1px solid #48494b;
  white-space: nowrap;
}
.ide-status .msg { flex: 1; padding-left: 7px; }
.ide-status span + span { margin-right: 12px; }
.ide-status .ic + .ic { margin-left: 9px; }

/* file manager */
.files { display: flex; flex-direction: column; top: 183px; left: 153px; width: 1021px; height: 514px; }
.files-head {
  display: flex;
  align-items: center;
  justify-content: flex-end;
  height: 43px;
  padding-right: 9px;
  border-radius: 6px 6px 0 0;
  background: linear-gradient(#44433d, #3c3b37);
}
.files-head .controls { padding: 6px 0 8px 5px; border-left: 1px solid #4b4a45; }
.files-body { display: flex; flex: 1; }
.files-rail { width: 38px; background: #4f4e46; }
.files-side { width: 160px; border-right: 2px solid #b4b2af; background: #3c3b37; }
.files-view { display: flex; flex: 1; flex-direction: column; align-items: flex-end; justify-content: flex-end; background: #f2f1f0; }
.files-status {
  width: 229px;
  height: 31px;
  padding: 5px 20px 0 0;
  border: solid #6b6b6b;
  border-width: 1px 0 0 1px;
  color: #6e6e6e;
  text-align: right;
}

/* Swing windows */
.purchase, .store, .dialog {
  background: #eeeeee;
  color: #333333;
  font: bold 12px "DejaVu Sans", sans-serif;
}
.titlebar h2 { font-family: "Noto Sans", "Open Sans", sans-serif; }
.purchase { top: 0; left: 0; width: 600px; height: 400px; }
.purchase-form { display: flex; align-items: center; justify-content: center; gap: 6px; padding-top: 5px; }
.purchase-form label { padding-right: 3px; }
.purchase-form input {
  width: 123px;
  height: 19px;
  padding: 0 1px;
  border: 1px solid #7a8a99;
  background: #ffffff;
  color: #333333;
  font: 12px "DejaVu Sans", sans-serif;
}
.store { top: 82px; left: 92px; width: 1000px; height: 600px; }
.store h1 { padding: 1px 0 0 174px; font-size: 24px; line-height: 28px; text-align: center; }
.store-actions { display: flex; justify-content: center; gap: 5px; padding-top: 5px; }
.jbtn {
  height: 25px;
  padding: 0 16px;
  border: 1px solid #7a8a99;
  background: linear-gradient(#dde8f3, #ffffff 30%, #dce7f2 60%, #b8cfe5);
  font: inherit;
}
.dialog {
  display: flex;
  flex-direction: column;
  top: 310px;
  left: 477px;
  width: 334px;
  box-shadow: 0 4px 18px rgba(0, 0, 0, .65);
}
.dialog .titlebar { background: linear-gradient(#5a564c, #3f3e39); color: #dfdbd2; }
.dialog .titlebar .controls { margin-left: -16px; }
.dialog .controls button { background: linear-gradient(#f4784e, #dd4814); }
.message { display: flex; gap: 14px; padding: 10px 10px 10px 11px; }
.message svg { width: 32px; height: 32px; }
.message p { padding-top: 1px; line-height: 31px; white-space: nowrap; }
.ok { align-self: center; margin-bottom: 13px; padding: 0 7px; border-width: 2px; }
.ok span { display: block; padding: 1px 0; border: 1px solid #a3b8cc; }
```
